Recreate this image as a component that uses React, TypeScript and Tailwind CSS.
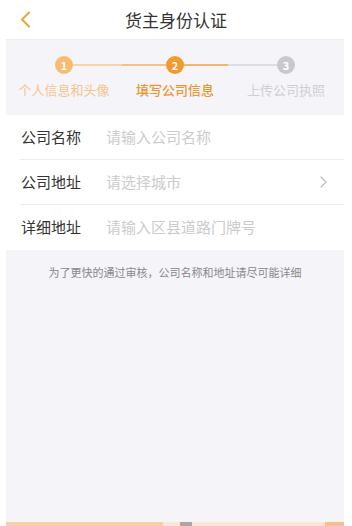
import React from 'react';

const FONT = { fontFamily: '"Noto Sans CJK SC", "Noto Sans", sans-serif' };

const STEPS = [
  { n: 1, label: "个人信息和头像", circle: "bg-[#f7bc72]", text: "text-[#f6c58e]", left: "", right: "bg-[#f8d4a8]" },
  { n: 2, label: "填写公司信息", circle: "bg-[#f29a2e]", text: "text-[#ec9630] font-medium", left: "bg-[#f5c185]", right: "bg-[#f3b56e]" },
  { n: 3, label: "上传公司执照", circle: "bg-[#c9c9cc]", text: "text-[#cfcfd2]", left: "bg-[#dedee2]", right: "" },
];

const ROWS = [
  { label: "公司名称", hint: "请输入公司名称", arrow: false },
  { label: "公司地址", hint: "请选择城市", arrow: true },
  { label: "详细地址", hint: "请输入区县道路门牌号", arrow: false },
];

export default function App() {
  return (
    <div className="w-[352px] h-[526px] bg-white flex flex-col overflow-hidden" style={FONT}>
      {/* header */}
      <div className="h-[39px] shrink-0 grid grid-cols-[60px_1fr_60px] items-center">
        <div className="pl-[20px] flex items-center">
          <svg width="11" height="17" viewBox="0 0 11 17" fill="none">
            <path d="M9 1.5 L2 8.5 L9 15.5" stroke="#f0a23a" strokeWidth="2" strokeLinecap="round" strokeLinejoin="round" />
          </svg>
        </div>
        <div className="text-center text-[17px] text-[#333333] leading-none">货主身份认证</div>
        <div />
      </div>

      <div className="flex-1 ml-[6px] mr-[8px] flex flex-col bg-[#f5f4f8]">
        {/* stepper */}
        <div className="h-[76px] shrink-0 grid grid-cols-[116px_106px_1fr] pt-[16px] border-t border-[#ececf0]">
          {STEPS.map(s => (
            <div key={s.n} className="flex flex-col items-center">
              <div className="w-full h-[18px] flex items-center">
                <div className={`flex-1 h-[1.5px] ${s.left}`} />
                <div className={`w-[18px] h-[18px] rounded-full ${s.circle} flex items-center justify-center text-white text-[11px] font-bold leading-none`}>
                  {s.n}
                </div>
                <div className={`flex-1 h-[1.5px] ${s.right}`} />
              </div>
              <div className={`mt-[8px] text-[13px] leading-[16px] whitespace-nowrap ${s.text}`}>{s.label}</div>
            </div>
          ))}
        </div>

        {/* form */}
        <div className="bg-white flex flex-col">
          {ROWS.map((r, i) => (
            <div key={r.label} className={`h-[45px] ml-[14px] flex items-center ${i < ROWS.length - 1 ? "border-b border-[#ededf0]" : ""}`}>
              <div className="w-[86px] pl-[1px] text-[15px] text-[#333333]">{r.label}</div>
              <div className="flex-1 text-[15px] text-[#cccccc]">{r.hint}</div>
              {r.arrow && (
                <svg className="mr-[17px]" width="7" height="12" viewBox="0 0 7 12" fill="none">
                  <path d="M1 1 L6 6 L1 11" stroke="#bdbdbd" strokeWidth="1.2" strokeLinecap="round" strokeLinejoin="round" />
                </svg>
              )}
            </div>
          ))}
        </div>

        {/* hint */}
        <div className="pt-[14px] text-center text-[11px] leading-[16px] text-[#88888c]">
          为了更快的通过审核，公司名称和地址请尽可能详细
        </div>

        <div className="flex-1" />

        {/* button edge */}
        <div className="h-[4px] flex">
          <div className="w-[157px] bg-[#f9cfa5]" />
          <div className="flex-1 bg-[#fbe7d3] flex">
            <div className="ml-[17px] w-[12px] bg-[#b0a59c]" />
          </div>
          <div className="w-[19px] bg-[#f5c08a]" />
        </div>
      </div>
    </div>
  );
}
